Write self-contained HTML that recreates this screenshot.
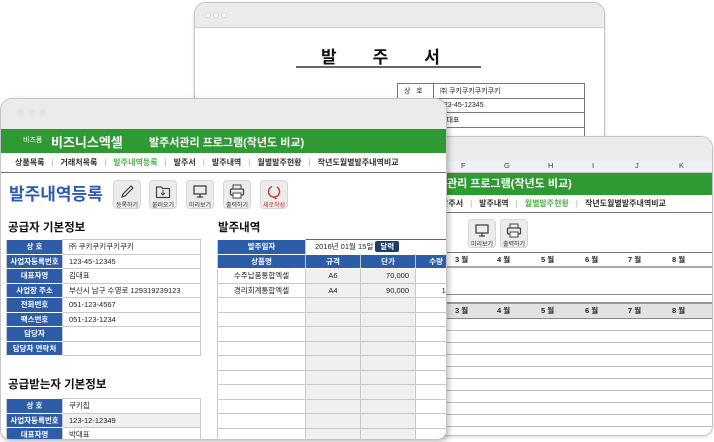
<!DOCTYPE html><html><head><meta charset="utf-8"><style>
*{margin:0;padding:0;box-sizing:border-box}
body{width:714px;height:442px;background:#fff;position:relative;overflow:hidden;font-family:"Liberation Sans","Noto Sans CJK KR",sans-serif;color:#222}
.a{position:absolute}
.win{position:absolute;background:#fff;border:1px solid #c4c4c4;border-radius:12px 12px 10px 10px;overflow:hidden;box-shadow:0 1px 3px rgba(0,0,0,.15)}
.tb{position:absolute;left:0;right:0;top:0;background:#ebebeb;border-bottom:1px solid #d0d0d0}
.dot{position:absolute;width:7px;height:7px;border-radius:50%;background:#fff;border:1px solid #d8d8d8}
.green{position:absolute;left:0;right:0;background:#2f9a33;color:#fff;font-weight:bold}
.menu{position:absolute;left:0;right:0;font-size:8px;font-weight:bold;color:#333;white-space:nowrap;border-bottom:1.5px solid #777}
.menu span.s{color:#aaa;margin:0 7px;font-weight:normal}
table{border-collapse:collapse;position:absolute;font-size:7.5px;table-layout:fixed}
td{border:1px solid #c8c8c8;height:14.5px;padding:0 6px;white-space:nowrap;overflow:hidden}
td.l{background:#2d5ca8;color:#fff;text-align:center;font-weight:bold;border-color:#fff #c8c8c8;padding:0 2px}
.ib{position:absolute;width:28px;height:29px;background:#ececec;border:1px solid #d6d6d6;border-radius:4px;font-size:6px;text-align:center;color:#333}
.ib svg{display:block;margin:3px auto 1px}
.h2{position:absolute;font-size:11.5px;font-weight:bold;color:#111}
</style></head><body>

<div class="win" style="left:194px;top:2px;width:411px;height:200px">
 <div class="tb" style="height:25px"></div>
 <div class="dot" style="left:10px;top:9px;width:6px;height:6px"></div><div class="dot" style="left:18px;top:9px;width:6px;height:6px"></div><div class="dot" style="left:26px;top:9px;width:6px;height:6px"></div>
 <div class="a" style="left:126px;top:40px;font-size:17px;font-weight:bold;letter-spacing:36px;color:#111">발주서</div>
 <div class="a" style="left:101px;top:63px;width:185px;height:2px;background:#666"></div>
 <table style="left:202px;top:80px;width:188px;font-size:7px">
  <tr><td style="width:36px;border-color:#777">상 &nbsp; 호</td><td style="border-color:#777">㈜ 쿠키쿠키쿠키쿠키</td></tr>
  <tr><td style="border-color:#777"></td><td style="border-color:#777">123-45-12345</td></tr>
  <tr><td style="border-color:#777"></td><td style="border-color:#777">김대표</td></tr>
  <tr><td style="border-color:#777"></td><td style="border-color:#777"></td></tr>
 </table>
</div>

<div class="win" style="left:434px;top:136px;width:279px;height:300px">
 <div class="tb" style="height:24px;border:none"></div>
 <div class="a" style="left:0;top:24px;width:279px;height:12px;background:#eef0f3;border-bottom:1px solid #ccc;font-size:7.5px;color:#444">
  <span class="a" style="left:26px">F</span><span class="a" style="left:69px">G</span><span class="a" style="left:113px">H</span><span class="a" style="left:157px">I</span><span class="a" style="left:200px">J</span><span class="a" style="left:244px">K</span>
 </div>
 <div class="green" style="top:36px;height:22px;font-size:11px;line-height:22px;padding-left:12px">관리 프로그램(작년도 비교)</div>
 <div class="menu" style="top:58px;height:18px;line-height:17px;padding-left:6px">발주서<span class="s">|</span>발주내역<span class="s">|</span><span style="color:#55b050">월별발주현황</span><span class="s">|</span>작년도월별발주내역비교</div>
 <div class="ib" style="left:33px;top:82px"><svg width="16" height="15"><rect x="2" y="2" width="12" height="8" fill="none" stroke="#444" stroke-width="1.3"/><path d="M8 10v3M5 13h6" stroke="#444" stroke-width="1.3"/></svg>미리보기</div>
 <div class="ib" style="left:65px;top:82px"><svg width="16" height="15"><rect x="4" y="1" width="8" height="4" fill="none" stroke="#444"/><rect x="1.5" y="5" width="13" height="6" rx="1" fill="none" stroke="#444" stroke-width="1.3"/><rect x="4" y="9" width="8" height="5" fill="#fff" stroke="#444"/></svg>출력하기</div>
 <div class="a" style="left:0;top:115px;width:279px;height:16px;border-top:1.5px solid #777;border-bottom:2px solid #aaa;font-size:7.5px;font-weight:bold;line-height:14px">
  <span class="a" style="left:20px">3 월</span><span class="a" style="left:62px">4 월</span><span class="a" style="left:106px">5 월</span><span class="a" style="left:150px">6 월</span><span class="a" style="left:193px">7 월</span><span class="a" style="left:237px">8 월</span></div>
 <div class="a" style="left:0;top:157px;width:279px;height:1px;background:#888"></div>
 <div class="a" style="left:0;top:165px;width:279px;height:17px;background:#e2e2e2;border-top:2px solid #999;border-bottom:1.5px solid #888;font-size:7.5px;font-weight:bold;line-height:14px">
  <span class="a" style="left:20px">3 월</span><span class="a" style="left:62px">4 월</span><span class="a" style="left:106px">5 월</span><span class="a" style="left:150px">6 월</span><span class="a" style="left:193px">7 월</span><span class="a" style="left:237px">8 월</span></div>
 <div class="a" style="left:0;top:182px;width:279px;height:118px;background:repeating-linear-gradient(#fff 0 11px,#bbb 11px 12px)"></div>
</div>

<div class="win" style="left:0;top:98px;width:447px;height:342px;box-shadow:2px 2px 6px rgba(0,0,0,.25)">
 <div class="tb" style="height:30px;border:none"></div>
 <div class="dot" style="left:16px;top:10px;background:#e4e4e4;border-color:#e4e4e4"></div><div class="dot" style="left:27px;top:10px;background:#e4e4e4;border-color:#e4e4e4"></div><div class="dot" style="left:38px;top:10px;background:#e4e4e4;border-color:#e4e4e4"></div>
 <div class="green" style="top:30px;height:24px">
  <span class="a" style="left:22px;top:6px;font-size:7px;font-weight:normal">비즈폼</span>
  <span class="a" style="left:50px;top:3px;font-size:13px">비즈니스엑셀</span>
  <span class="a" style="left:148px;top:5px;font-size:11px">발주서관리 프로그램(작년도 비교)</span>
 </div>
 <div class="menu" style="top:54px;height:20px;line-height:20px;padding-left:14px">상품목록<span class="s">|</span>거래처목록<span class="s">|</span><span style="color:#55b050">발주내역등록</span><span class="s">|</span>발주서<span class="s">|</span>발주내역<span class="s">|</span>월별발주현황<span class="s">|</span>작년도월별발주내역비교</div>
 <div class="a" style="left:8px;top:81px;font-size:17px;font-weight:bold;color:#2a5db0">발주내역등록</div>
 <div class="ib" style="left:112px;top:81px"><svg width="16" height="15"><path d="M3 13l1-3 8-8 2 2-8 8z" fill="none" stroke="#444" stroke-width="1.2"/></svg>등록하기</div>
 <div class="ib" style="left:148px;top:81px"><svg width="16" height="15"><path d="M1.5 3h5l1 1.5h7v9h-13z" fill="none" stroke="#444" stroke-width="1.2"/><path d="M8 6v5M6 9l2 2 2-2" stroke="#444" fill="none"/></svg>불러오기</div>
 <div class="ib" style="left:185px;top:81px"><svg width="16" height="15"><rect x="2" y="2" width="12" height="8" fill="none" stroke="#444" stroke-width="1.3"/><path d="M8 10v3M5 13h6" stroke="#444" stroke-width="1.3"/></svg>미리보기</div>
 <div class="ib" style="left:222px;top:81px"><svg width="16" height="15"><rect x="4" y="1" width="8" height="4" fill="none" stroke="#444"/><rect x="1.5" y="5" width="13" height="6" rx="1" fill="none" stroke="#444" stroke-width="1.3"/><rect x="4" y="9" width="8" height="5" fill="#fff" stroke="#444"/></svg>출력하기</div>
 <div class="ib" style="left:259px;top:81px;color:#c0392b"><svg width="16" height="15"><path d="M6 2.5A5.5 5.5 0 1 0 11 3" fill="none" stroke="#c0392b" stroke-width="1.4"/><path d="M8 13l2 1.5-2 1" fill="none" stroke="#c0392b"/></svg>새로작성</div>

 <div class="h2" style="left:7px;top:120px">공급자 기본정보</div>
 <table style="left:5px;top:140px;width:195px;border:1.5px solid #666">
  <colgroup><col style="width:56px"><col></colgroup>
  <tr><td class="l">상 호</td><td>㈜ 쿠키쿠키쿠키쿠키</td></tr>
  <tr><td class="l">사업자등록번호</td><td>123-45-12345</td></tr>
  <tr><td class="l">대표자명</td><td>김대표</td></tr>
  <tr><td class="l">사업장 주소</td><td>부산시 남구 수영로 129319239123</td></tr>
  <tr><td class="l">전화번호</td><td>051-123-4567</td></tr>
  <tr><td class="l">팩스번호</td><td>051-123-1234</td></tr>
  <tr><td class="l">담당자</td><td></td></tr>
  <tr><td class="l">담당자 연락처</td><td></td></tr>
 </table>
 <div class="h2" style="left:7px;top:277px">공급받는자 기본정보</div>
 <table style="left:5px;top:299px;width:195px;border:1.5px solid #666">
  <colgroup><col style="width:56px"><col></colgroup>
  <tr><td class="l">상 호</td><td>쿠키집</td></tr>
  <tr><td class="l">사업자등록번호</td><td style="background:#f0f0f0">123-12-12349</td></tr>
  <tr><td class="l">대표자명</td><td>박대표</td></tr>
 </table>

 <div class="h2" style="left:217px;top:120px">발주내역</div>
 <table style="left:216px;top:140px;width:240px;border-left:1.5px solid #666;border-top:1.5px solid #666">
  <colgroup><col style="width:88px"><col style="width:55px"><col style="width:55px"><col></colgroup>
  <tr><td class="l">발주일자</td><td colspan="3" style="border:none;padding-left:9px">2016년 01월 15일 <span style="background:#1f3d6b;color:#fff;padding:1px 5px;border-radius:2px;font-weight:bold">달력</span></td></tr>
  <tr><td class="l">상품명</td><td class="l">규격</td><td class="l">단가</td><td class="l">수량</td></tr>
  <tr><td style="text-align:center">수주납품통합엑셀</td><td style="background:#f0f0f0;text-align:center">A6</td><td style="background:#f0f0f0;text-align:right">70,000</td><td style="text-align:right">5</td></tr>
  <tr><td style="text-align:center">경리회계통합엑셀</td><td style="background:#f0f0f0;text-align:center">A4</td><td style="background:#f0f0f0;text-align:right">90,000</td><td style="text-align:right">10</td></tr>
  <tr><td></td><td style="background:#f0f0f0"></td><td style="background:#f0f0f0"></td><td></td></tr>
  <tr><td></td><td style="background:#f0f0f0"></td><td style="background:#f0f0f0"></td><td></td></tr>
  <tr><td></td><td style="background:#f0f0f0"></td><td style="background:#f0f0f0"></td><td></td></tr>
  <tr><td></td><td style="background:#f0f0f0"></td><td style="background:#f0f0f0"></td><td></td></tr>
  <tr><td></td><td style="background:#f0f0f0"></td><td style="background:#f0f0f0"></td><td></td></tr>
  <tr><td></td><td style="background:#f0f0f0"></td><td style="background:#f0f0f0"></td><td></td></tr>
  <tr><td></td><td style="background:#f0f0f0"></td><td style="background:#f0f0f0"></td><td></td></tr>
  <tr><td></td><td style="background:#f0f0f0"></td><td style="background:#f0f0f0"></td><td></td></tr>
  <tr><td></td><td style="background:#f0f0f0"></td><td style="background:#f0f0f0"></td><td></td></tr>
  <tr><td></td><td style="background:#f0f0f0"></td><td style="background:#f0f0f0"></td><td></td></tr>
 </table>
</div>
</body></html>
